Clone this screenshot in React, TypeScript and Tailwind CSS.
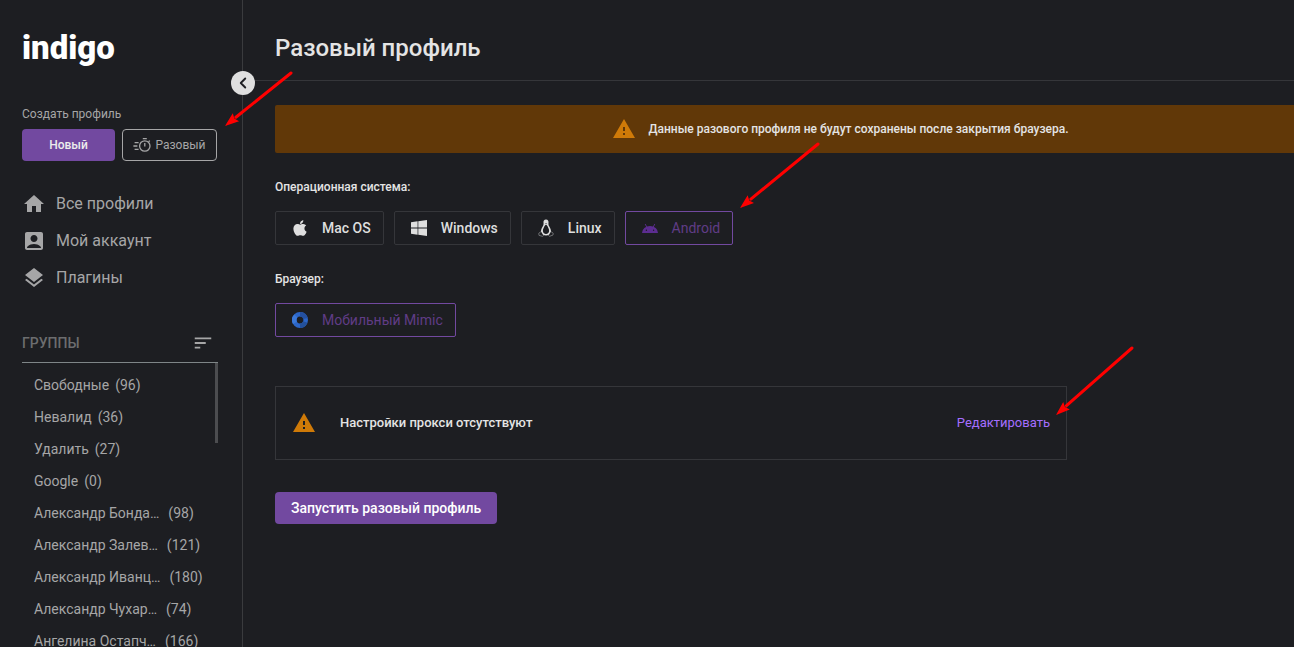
import type { ReactNode } from "react";
import { FaApple } from "react-icons/fa";
import {
  MdAccountBox,
  MdHome,
  MdLayers,
  MdSort,
  MdWarning,
} from "react-icons/md";
import { ChevronLeft } from "lucide-react";
import clsx from "clsx";

interface Group {
  name: string;
  count: number;
}

interface OptionButtonProps {
  icon: ReactNode;
  label: string;
  active?: boolean;
}

interface ArrowProps {
  from: [number, number];
  to: [number, number];
}

const navItems = [
  { label: "Все профили", icon: MdHome },
  { label: "Мой аккаунт", icon: MdAccountBox },
  { label: "Плагины", icon: MdLayers },
];

const groups: Group[] = [
  { name: "Свободные", count: 96 },
  { name: "Невалид", count: 36 },
  { name: "Удалить", count: 27 },
  { name: "Google", count: 0 },
  { name: "Александр Бонда…", count: 98 },
  { name: "Александр Залев…", count: 121 },
  { name: "Александр Иванц…", count: 180 },
  { name: "Александр Чухар…", count: 74 },
  { name: "Ангелина Остапч…", count: 166 },
];

function QuickTimerIcon() {
  return (
    <svg
      viewBox="0 0 18 16"
      className="h-4 w-[18px]"
      fill="none"
      stroke="currentColor"
      strokeWidth="1.3"
      aria-hidden="true"
    >
      <circle cx="11.8" cy="9" r="5.2" />
      <path d="M9.8 1.6h4M11.8 6v3.4M15.6 4.8l1.2-1.2M1.6 5.6h4M0.4 9h4M1.6 12.4h4" />
    </svg>
  );
}

function WindowsIcon() {
  return (
    <svg viewBox="0 0 16 16" className="size-4" fill="currentColor" aria-hidden="true">
      <path d="M0 2.2 6.6 1.3V7.6H0zM7.3 1.2 16 0V7.6H7.3zM0 8.4H6.6V14.7L0 13.8zM7.3 8.4H16V16L7.3 14.8z" />
    </svg>
  );
}

function LinuxIcon() {
  return (
    <svg viewBox="0 0 16 18" className="h-[18px] w-4" aria-hidden="true">
      <path
        d="M8 .6C6 .6 5.4 2 5.5 3.6c.1 1.8.2 2.4-.8 4C3.700 9.200 2.900 10.800 3 12.600l2 3.200c1.700 1 4.300 1 6 0l2-3.200c.1-1.800-.7-3.400-1.700-5-1-1.600-.9-2.200-.8-4C10.600 2 10 .6 8 .6z"
        fill="#dedede"
      />
      <path
        d="M8 6c-.8 0-1.300.5-1.700 1.600C5.600 9.200 4.800 10.400 4.900 12c.1 1.600 1.200 3 3.100 3s3-1.400 3.100-3c.1-1.600-.7-2.800-1.400-4.400C9.300 6.500 8.800 6 8 6z"
        fill="#1d1e22"
      />
      <path d="M6.900 4.600 8 4.200l1.200.4L8 5.500z" fill="#55565a" />
      <path
        d="M2.800 12.800.8 14.200l.2 2.200 3.800 1 1-1.200M13.200 12.800l2 1.400-.2 1.800-3.600 1.400-1-1.200"
        fill="none"
        stroke="#77787b"
        strokeWidth=".9"
      />
    </svg>
  );
}

function AndroidIcon() {
  return (
    <svg viewBox="0 0 16 16" className="size-4" aria-hidden="true">
      <path d="M0 13a8 7 0 0 1 16 0z" fill="#5c2d91" />
      <path d="M3.200 4 4.800 7.200M12.800 4l-1.600 3.200" stroke="#5c2d91" strokeWidth=".9" />
      <circle cx="4.400" cy="10.200" r=".7" fill="#1d1e22" />
      <circle cx="11.600" cy="10.200" r=".7" fill="#1d1e22" />
    </svg>
  );
}

function MimicIcon() {
  return (
    <svg viewBox="0 0 16 16" className="size-4" fill="none" strokeWidth="4.6" aria-hidden="true">
      <circle cx="8" cy="8" r="5.7" stroke="#2c66c8" />
      <path d="M8 2.3A5.7 5.7 0 0 1 13.500 6.500" stroke="#2450a0" />
      <path d="M13.300 10A5.700 5.700 0 0 1 8 13.700" stroke="#23509a" />
      <path d="M3 10.800A5.700 5.700 0 0 1 3.900 4" stroke="#3b78d8" />
    </svg>
  );
}

function OptionButton({ icon, label, active }: OptionButtonProps) {
  return (
    <button
      type="button"
      aria-pressed={!!active}
      className={clsx(
        "flex items-center gap-3.5 rounded-xs border pr-3 pl-4 text-sm leading-8",
        active
          ? "border-[#7249a0] text-[#603c86]"
          : "border-[#35363a] font-medium text-[#dedede]",
      )}
    >
      {icon}
      {label}
    </button>
  );
}

function Arrow({ from, to }: ArrowProps) {
  const [x1, y1] = from;
  const [x2, y2] = to;
  const length = Math.hypot(x2 - x1, y2 - y1);
  const ux = (x2 - x1) / length;
  const uy = (y2 - y1) / length;
  const bx = x2 - ux * 14;
  const by = y2 - uy * 14;
  return (
    <g stroke="#ff0000" fill="#ff0000">
      <line x1={x1} y1={y1} x2={bx} y2={by} strokeWidth="3" strokeLinecap="round" />
      <polygon
        stroke="none"
        points={`${x2},${y2} ${bx - uy * 5},${by + ux * 5} ${bx + ux * 2},${by + uy * 2} ${bx + uy * 5},${by - ux * 5}`}
      />
    </g>
  );
}

function Sidebar() {
  return (
    <aside className="relative w-[243px] shrink-0 border-r border-[#3a3b3e] pr-6 pl-[22px] text-[#a6a6a7]">
      <div className="pt-6 font-[Roboto,sans-serif] text-[33px] leading-12 font-black text-white">
        indigo
      </div>

      <button
        type="button"
        aria-label="Свернуть меню"
        className="absolute top-[71px] -right-[13px] flex size-6 items-center justify-center rounded-full bg-[#dfdfdf] text-[#1d1e22]"
      >
        <ChevronLeft className="size-[18px]" strokeWidth={2.5} />
      </button>

      <p className="mt-8 text-xs leading-5">Создать профиль</p>
      <div className="mt-[5px] flex gap-[7px] pr-px text-xs">
        <button
          type="button"
          className="h-8 flex-1 rounded-sm bg-[#7249a0] font-medium text-[#ececec]"
        >
          Новый
        </button>
        <button
          type="button"
          className="flex h-8 flex-1 items-center justify-center gap-1 rounded-sm border border-[#a6a6a7]"
        >
          <QuickTimerIcon />
          Разовый
        </button>
      </div>

      <nav className="mt-6 flex flex-col">
        {navItems.map(({ label, icon: Icon }) => (
          <a key={label} href="#" className="flex h-[37px] items-center gap-2.5">
            <Icon className="size-6" />
            {label}
          </a>
        ))}
      </nav>

      <div className="mt-7 flex h-[39px] items-center justify-between border-b border-[#7f8688] pr-1 text-sm">
        <h2 className="font-medium text-[#6c6d6f]">ГРУППЫ</h2>
        <button type="button" aria-label="Сортировать группы">
          <MdSort className="size-[22px]" />
        </button>
      </div>
      <div className="relative">
        <ul className="pt-1.5 pl-3 text-sm">
          {groups.map(({ name, count }) => (
            <li key={name}>
              <a
                href="#"
                className={clsx("flex h-8 items-center", name.endsWith("…") ? "gap-[9px]" : "gap-1.5")}
              >
                <span>{name}</span>
                <span>({count})</span>
              </a>
            </li>
          ))}
        </ul>
        {/* Scrollbar thumb */}
        <div className="absolute top-0 right-0 h-20 w-[3px] bg-[#4c4d50]" />
      </div>
    </aside>
  );
}

export default function App() {
  return (
    <div className="relative flex h-screen overflow-hidden bg-[#1d1e22] font-[Roboto,sans-serif]">
      <Sidebar />

      <main className="min-w-0 flex-1 text-[#e4e4e4]">
        <header className="flex h-[81px] border-b border-[#35363a] pt-8 pl-8">
          <h1 className="text-2xl font-medium">Разовый профиль</h1>
        </header>

        <div className="flex flex-col items-start pt-6 pl-8">
          <div className="flex h-12 w-full items-center justify-center gap-3 rounded-l-xs bg-[#613808] pl-28 text-xs font-medium">
            <MdWarning className="size-6 text-[#cf7a08]" />
            Данные разового профиля не будут сохранены после закрытия браузера.
          </div>

          <h2 className="mt-6 text-xs leading-5 font-medium">Операционная система:</h2>
          <div className="mt-3.5 flex gap-2.5">
            <OptionButton icon={<FaApple className="h-[18px] w-4" />} label="Mac OS" />
            <OptionButton icon={<WindowsIcon />} label="Windows" />
            <OptionButton icon={<LinuxIcon />} label="Linux" />
            <OptionButton icon={<AndroidIcon />} label="Android" active />
          </div>

          <h2 className="mt-6 text-xs leading-5 font-medium">Браузер:</h2>
          <div className="mt-3.5 flex">
            <OptionButton icon={<MimicIcon />} label="Мобильный Mimic" active />
          </div>

          <section className="mt-[49px] flex h-[74px] w-full max-w-[792px] items-center border border-[#35363a] px-4">
            <MdWarning className="size-6 text-[#cf7a08]" />
            <p className="ml-6 text-[13px] font-medium">Настройки прокси отсутствуют</p>
            <a href="#" className="ml-auto text-[13px] text-[#a56eff]">
              Редактировать
            </a>
          </section>

          <button
            type="button"
            className="mt-8 h-8 rounded-sm bg-[#7249a0] px-4 text-sm font-medium text-white"
          >
            Запустить разовый профиль
          </button>
        </div>
      </main>

      {/* Pointer arrows drawn over the page */}
      <svg
        width="1294"
        height="647"
        className="pointer-events-none absolute top-0 left-0 max-w-none"
        aria-hidden="true"
      >
        <Arrow from={[291, 73]} to={[225, 126]} />
        <Arrow from={[818, 144]} to={[740, 208]} />
        <Arrow from={[1132, 348]} to={[1056, 415]} />
      </svg>
    </div>
  );
}
